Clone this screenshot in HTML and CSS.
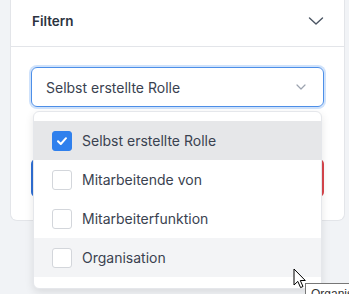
FILE: index.html
```html
<!DOCTYPE html>
<html lang="de">
<head>
<meta charset="utf-8">
<link rel="stylesheet" href="styles.css">
</head>
<body>
<div class="page">
  <div class="card">
    <div class="card-header">
      <span class="title">Filtern</span>
      <svg class="chev" width="16" height="10" viewBox="0 0 16 10"><path d="M1.5 2 L8 8 L14.5 2" fill="none" stroke="#4b5563" stroke-width="1.4" stroke-linecap="round" stroke-linejoin="round"/></svg>
    </div>
    <div class="card-body">
      <div class="select-wrap">
        <div class="select">
          <span>Selbst erstellte Rolle</span>
          <svg width="10" height="6" viewBox="0 0 10 6"><path d="M1 1 L5 5 L9 1" fill="none" stroke="#9ca3af" stroke-width="1.2" stroke-linecap="round" stroke-linejoin="round"/></svg>
        </div>
        <div class="menu">
          <div class="item selected">
            <span class="box checked"><svg width="12" height="10" viewBox="0 0 12 10"><path d="M2 5.2 L4.8 8 L10 2.2" fill="none" stroke="#fff" stroke-width="2" stroke-linecap="round" stroke-linejoin="round"/></svg></span>
            <span>Selbst erstellte Rolle</span>
          </div>
          <div class="item"><span class="box"></span><span>Mitarbeitende von</span></div>
          <div class="item"><span class="box"></span><span>Mitarbeiterfunktion</span></div>
          <div class="item hover"><span class="box"></span><span>Organisation</span></div>
        </div>
      </div>
      <div class="actions">
        <button class="btn primary" aria-label="Anwenden"></button>
        <button class="btn danger" aria-label="Zurücksetzen"></button>
      </div>
    </div>
  </div>
</div>
<svg class="cursor" width="14" height="22" viewBox="0 0 14 22"><path d="M1 1 L1 17 L4.8 13.4 L7.6 19.6 L10 18.5 L7.3 12.5 L12.3 12.5 Z" fill="#fff" stroke="#000" stroke-width="1" stroke-linejoin="round"/></svg>
<div class="tooltip">Organisation</div>
</body>
</html>
```
FILE: styles.css
```css
html, body {
  margin: 0;
  padding: 0;
  background: #f1f3f6;
  font-family: Inter, "Noto Sans", sans-serif;
  overflow: hidden;
  width: 349px;
  height: 294px;
  position: relative;
}
.page {
  padding-left: 10px;
}
.card {
  width: 335px;
  box-sizing: border-box;
  background: #fff;
  border: 1px solid #e3e5e9;
  border-top: none;
  border-radius: 0 0 7px 7px;
}
.card-header {
  height: 47px;
  display: flex;
  align-items: center;
  justify-content: space-between;
  padding: 0 20px 5px 21px;
  box-sizing: border-box;
  border-bottom: 1px solid #e3e5e9;
}
.title {
  font-size: 13.5px;
  font-weight: 600;
  color: #2b3340;
}
.chev { margin-top: 1px; }
.card-body {
  padding: 20px 20px 23px 20px;
}
.select-wrap {
  position: relative;
}
.select {
  height: 40px;
  box-sizing: border-box;
  border: 1px solid #4d8fe8;
  box-shadow: 0 0 0 2px #cfe2fb;
  border-radius: 6px;
  display: flex;
  align-items: center;
  justify-content: space-between;
  padding: 0 17px 0 14px;
  font-size: 14px;
  color: #3a4250;
}
.menu {
  position: absolute;
  top: 44px;
  left: 2px;
  right: 2px;
  background: #fff;
  border: 1px solid #e5e7eb;
  border-radius: 6px;
  box-shadow: 0 3px 8px rgba(0,0,0,0.1);
  padding: 9px 0 11px;
  z-index: 2;
}
.item {
  height: 39px;
  display: flex;
  align-items: center;
  gap: 10px;
  padding-left: 18px;
  font-size: 14px;
  color: #3a4250;
}
.item.selected { background: #e6e7e9; }
.item.hover { background: #f3f4f6; }
.box {
  width: 20px;
  height: 20px;
  box-sizing: border-box;
  border: 1.5px solid #d3d6db;
  border-radius: 3px;
  background: #fff;
  display: flex;
  align-items: center;
  justify-content: center;
}
.box.checked {
  background: #2f80ed;
  border-color: #2f80ed;
}
.actions {
  margin-top: 52px;
  display: flex;
  gap: 12px;
}
.btn {
  flex: 1;
  height: 38px;
  border-radius: 5px;
  border: none;
  font-family: inherit;
  font-size: 13px;
}
.btn.primary { background: #2f6fd6; }
.btn.danger { background: #d9454c; }
.cursor {
  position: absolute;
  left: 293px;
  top: 268px;
  z-index: 5;
}
.tooltip {
  position: absolute;
  left: 305px;
  top: 283px;
  border: 1px solid #767676;
  background: #fff;
  font-family: "Liberation Sans", sans-serif;
  font-size: 12px;
  color: #333;
  padding: 3px 5px;
  white-space: nowrap;
  z-index: 4;
}
```
